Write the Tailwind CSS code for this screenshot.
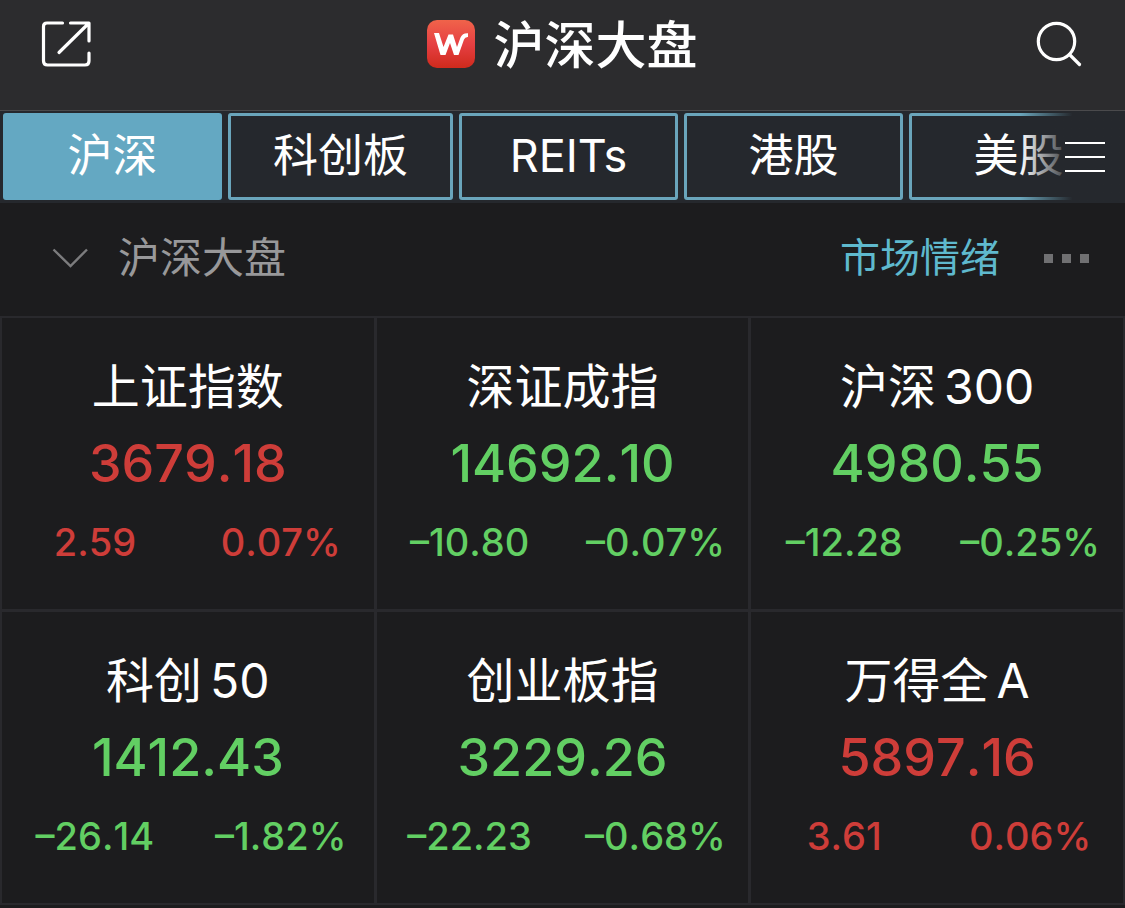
<!DOCTYPE html>
<html lang="zh-CN">
<head>
<meta charset="utf-8">
<meta name="viewport" content="width=device-width, initial-scale=1">
<title>沪深大盘</title>
<script src="https://cdn.jsdelivr.net/npm/@tailwindcss/browser@4"></script>
</head>
<body class="min-h-screen bg-[#1c1c1e] font-['Inter','Noto_Sans_CJK_SC',sans-serif] text-white">
<header class="flex h-[111px] items-start justify-between border-b border-[#4a4a4c] bg-[#2c2c2e] px-10 pt-4">
  <button type="button" aria-label="分享" class="flex h-14 w-14 items-center">
    <svg class="h-12 w-[52px]" viewBox="0 0 52 48" fill="none" stroke="#fff" stroke-width="3.2" stroke-linecap="round" stroke-linejoin="round"><path d="M22.500 3H7Q3.500 3 3.500 6.500V41Q3.500 45 7.500 45H45Q49 45 49 41V33M30.500 3H49V21M48 4L19 32.500"/></svg>
  </button>
  <h1 class="flex items-start gap-[18px] text-[51px] leading-[60px] font-medium">
    <svg class="mt-1 h-12 w-12" viewBox="0 0 48 48" aria-hidden="true"><defs><linearGradient id="g" x2="0" y2="1"><stop stop-color="#f0634a"/><stop offset=".5" stop-color="#e64043"/><stop offset="1" stop-color="#cf2a1c"/></linearGradient></defs><rect width="48" height="48" rx="10" fill="url(#g)"/><path d="M7 13H12L16.500 27L21.500 14.500H26L30 27L33.500 17.500Q35.500 12.800 41 13.200V17Q38 16.800 37 19.500L31.500 35H27L23 23L18.500 35H13.500Z" fill="#fff"/></svg>
    沪深大盘
  </h1>
  <button type="button" aria-label="搜索" class="flex h-14 w-14 items-center justify-end">
    <svg class="h-12 w-[50px]" viewBox="0 0 50 48" fill="none" stroke="#fff" stroke-width="3.200" stroke-linecap="round"><circle cx="21.500" cy="21.500" r="18.200"/><path d="M34.500 34.500L44.500 44.500"/></svg>
  </button>
</header>
<nav class="relative overflow-hidden bg-[#25282d] text-[45px] leading-[80px]">
  <div class="flex gap-1.5 px-[3px] pt-0.5 pb-[3px]">
    <button type="button" aria-current="page" class="w-[219px] shrink-0 rounded-[3px] border-3 border-[#64a8c2] bg-[#64a8c2] pb-px">沪深</button>
    <button type="button" class="w-[225px] shrink-0 rounded-[3px] border-3 border-[#6aa5bb] pb-px">科创板</button>
    <button type="button" class="w-[219px] shrink-0 rounded-[3px] border-3 border-[#6aa5bb] pb-px">REITs</button>
    <button type="button" class="w-[219px] shrink-0 rounded-[3px] border-3 border-[#6aa5bb] pb-px">港股</button>
    <button type="button" class="w-[219px] shrink-0 rounded-[3px] border-3 border-[#6aa5bb] pb-px">美股</button>
  </div>
  <div class="absolute inset-y-0 right-0 flex w-[105px] items-center justify-end bg-linear-to-r from-[#25282d]/0 to-[#25282d] to-50% pr-5">
    <button type="button" aria-label="菜单"><svg class="h-8 w-10" viewBox="0 0 40 32" stroke="#fff" stroke-width="2"><path d="M0 2H40M0 16H40M0 30H40"/></svg></button>
  </div>
</nav>
<main>
  <div class="flex h-[113px] items-center justify-between pr-[35px] pb-[3px] pl-[52px]">
    <button type="button" class="flex items-center gap-[30px] text-[42px] leading-[60px] text-[#98989a]">
      <svg class="h-5 w-9" viewBox="0 0 36 20" fill="none" stroke="#7c7c7e" stroke-width="2.400"><path d="M1.500 1.500L18.500 18L35 1.500"/></svg>
      <span>沪深大盘</span>
    </button>
    <div class="flex items-center gap-10">
      <a href="#" class="text-[40px] leading-[60px] text-[#5fb9ce]">市场情绪</a>
      <button type="button" aria-label="更多"><svg class="h-[9px] w-[50px]" viewBox="0 0 50 9" fill="#707072"><path d="M4 0h9v9H4zM22 0h9v9h-9zM40 0h9v9h-9z"/></svg></button>
    </div>
  </div>
  <section class="grid grid-cols-3 gap-[3px] border-2 border-[#29292d] bg-[#29292d] [font-kerning:none]">
    <article class="bg-[#1c1c1e] pt-9 pb-7 text-center text-[#ce3d39]">
      <h2 class="text-[48px] leading-[66px] font-normal text-white">上证指数</h2>
      <p class="mt-1 text-[52px] leading-[80px] font-medium">3679.18</p>
      <div class="grid grid-cols-2 text-[38px] leading-[77px] font-medium"><span>2.59</span><span>0.07%</span></div>
    </article>
    <article class="bg-[#1c1c1e] pt-9 pb-7 text-center text-[#62cf63]">
      <h2 class="text-[48px] leading-[66px] font-normal text-white">深证成指</h2>
      <p class="mt-1 text-[52px] leading-[80px] font-medium">14692.10</p>
      <div class="grid grid-cols-2 text-[38px] leading-[77px] font-medium"><span>–10.80</span><span>–0.07%</span></div>
    </article>
    <article class="bg-[#1c1c1e] pt-9 pb-7 text-center text-[#62cf63]">
      <h2 class="text-[48px] leading-[66px] font-normal text-white">沪深<span class="ml-2">300</span></h2>
      <p class="mt-1 text-[52px] leading-[80px] font-medium">4980.55</p>
      <div class="grid grid-cols-2 text-[38px] leading-[77px] font-medium"><span>–12.28</span><span>–0.25%</span></div>
    </article>
    <article class="bg-[#1c1c1e] pt-9 pb-7 text-center text-[#62cf63]">
      <h2 class="text-[48px] leading-[66px] font-normal text-white">科创<span class="ml-2">50</span></h2>
      <p class="mt-1 text-[52px] leading-[80px] font-medium">1412.43</p>
      <div class="grid grid-cols-2 text-[38px] leading-[77px] font-medium"><span>–26.14</span><span>–1.82%</span></div>
    </article>
    <article class="bg-[#1c1c1e] pt-9 pb-7 text-center text-[#62cf63]">
      <h2 class="text-[48px] leading-[66px] font-normal text-white">创业板指</h2>
      <p class="mt-1 text-[52px] leading-[80px] font-medium">3229.26</p>
      <div class="grid grid-cols-2 text-[38px] leading-[77px] font-medium"><span>–22.23</span><span>–0.68%</span></div>
    </article>
    <article class="bg-[#1c1c1e] pt-9 pb-7 text-center text-[#ce3d39]">
      <h2 class="text-[48px] leading-[66px] font-normal text-white">万得全<span class="ml-2">A</span></h2>
      <p class="mt-1 text-[52px] leading-[80px] font-medium">5897.16</p>
      <div class="grid grid-cols-2 text-[38px] leading-[77px] font-medium"><span>3.61</span><span>0.06%</span></div>
    </article>
  </section>
</main>
</body>
</html>
